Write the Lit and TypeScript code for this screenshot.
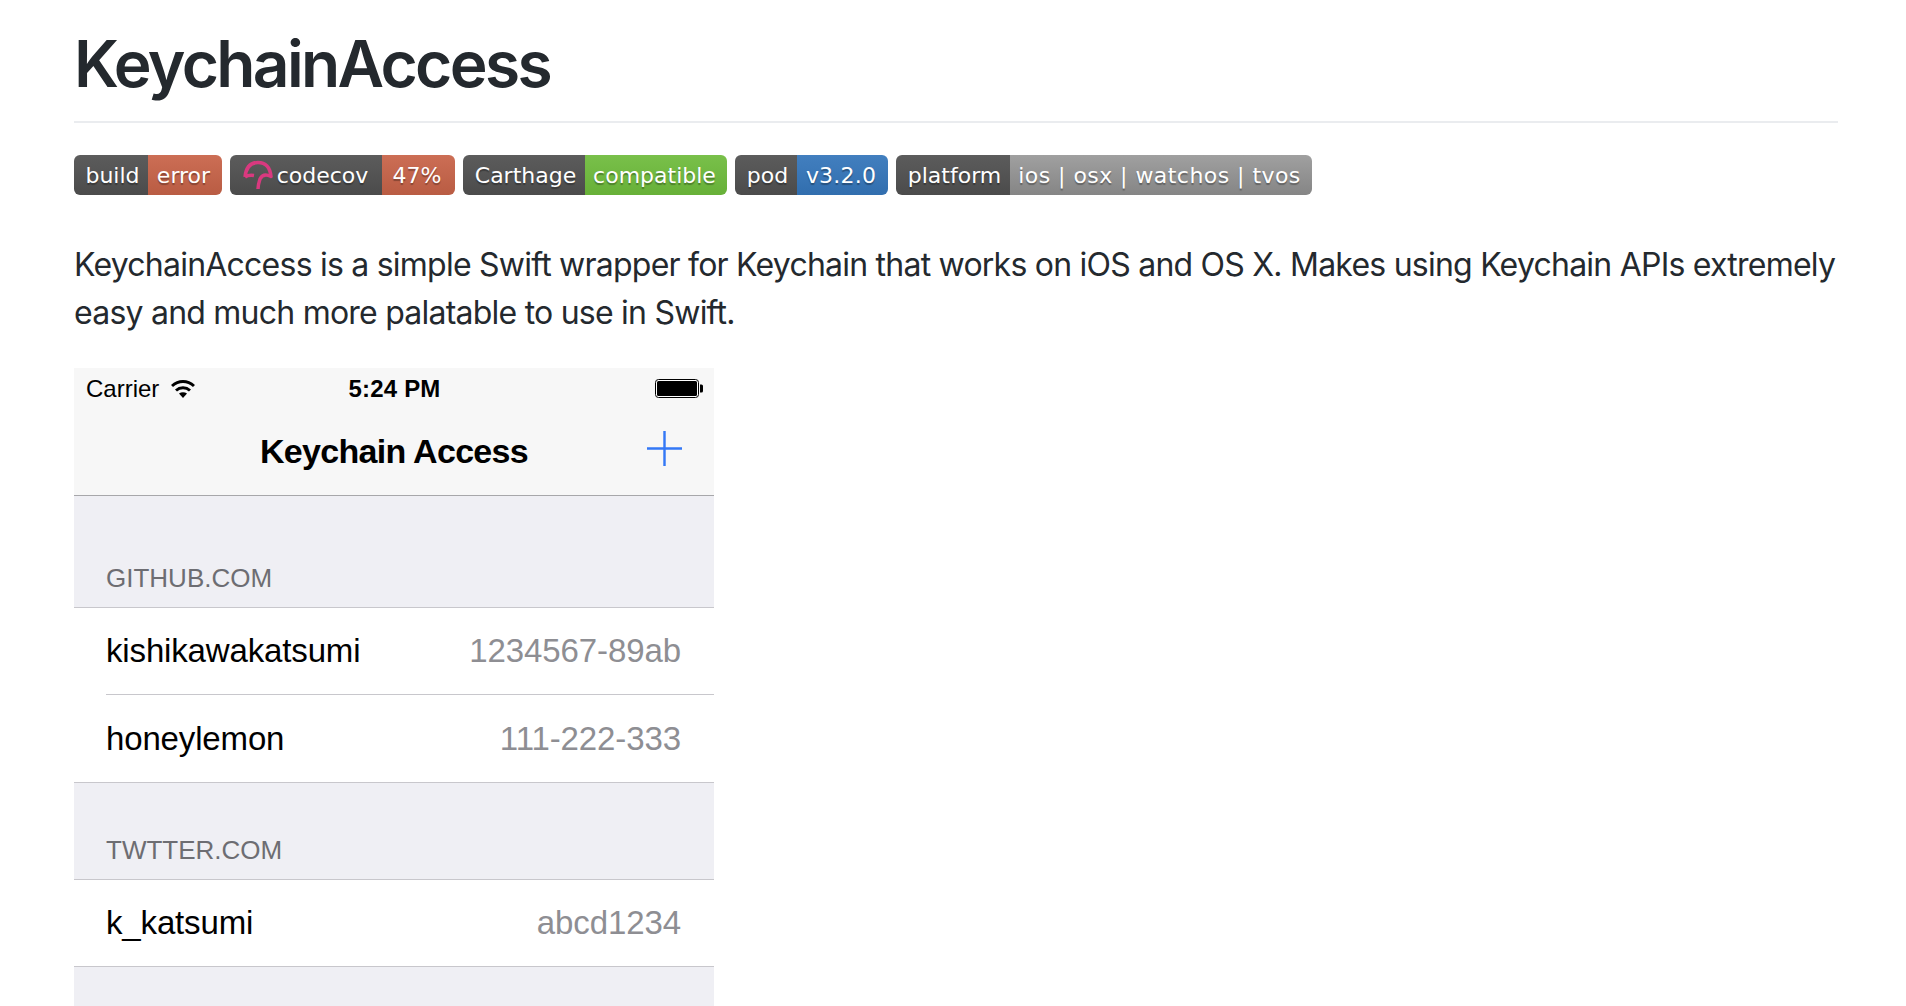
import { LitElement, html, css, svg } from "lit";
import { customElement } from "lit/decorators.js";

interface Seg {
  text: string;
  width: number;
  tone: string;
}

const badges: { segs: Seg[]; icon?: boolean }[] = [
  { segs: [{ text: "build", width: 74, tone: "dark" }, { text: "error", width: 74, tone: "red" }] },
  { segs: [{ text: "codecov", width: 152, tone: "dark" }, { text: "47%", width: 73, tone: "red" }], icon: true },
  { segs: [{ text: "Carthage", width: 122, tone: "dark" }, { text: "compatible", width: 142, tone: "green" }] },
  { segs: [{ text: "pod", width: 62, tone: "dark" }, { text: "v3.2.0", width: 91, tone: "blue" }] },
  { segs: [{ text: "platform", width: 114, tone: "dark" }, { text: "ios | osx | watchos | tvos", width: 302, tone: "gray" }] },
];

const sections = [
  {
    title: "GITHUB.COM",
    rows: [
      { name: "kishikawakatsumi", value: "1234567-89ab" },
      { name: "honeylemon", value: "111-222-333" },
    ],
  },
  { title: "TWTTER.COM", rows: [{ name: "k_katsumi", value: "abcd1234" }] },
];

const codecovIcon = svg`<g fill="none" stroke="#d9397f" stroke-width="3.5" stroke-linejoin="round">
  <path d="M9 23C10 13 15 8.500 22 8.500S34 13 35 22.500C30 20 26 21 24 25 23 28 22 31 22 35" />
  <path d="M9 23C12 21 15 21 18 21.500" />
</g>`;

@customElement("app-root")
export class AppRoot extends LitElement {
  static styles = css`
    :host {
      display: block;
      height: 100vh;
      overflow: hidden;
      background: #fff;
      color: #24292e;
      font-family: Inter, "Liberation Sans", sans-serif;
    }
    .page {
      padding: 0 68px 0 74px;
    }
    h1 {
      margin: 0;
      height: 121px;
      font-size: 64px;
      line-height: 127px;
      font-weight: 600;
      letter-spacing: -2.65px;
      border-bottom: 2px solid #eaecef;
    }
    .badges {
      display: flex;
      gap: 8px;
      margin-top: 32px;
    }
    .badge {
      display: flex;
      height: 40px;
      border-radius: 6px;
      overflow: hidden;
      position: relative;
    }
    .seg {
      display: flex;
      align-items: center;
      justify-content: center;
      box-sizing: border-box;
      color: #fff;
      font-family: "DejaVu Sans", Verdana, sans-serif;
      font-size: 22px;
      white-space: nowrap;
      text-shadow: 0 2px 1px rgba(1, 1, 1, 0.3);
      padding-right: 3px;
    }
    .seg.dark {
      background: linear-gradient(#5c5c5c, #4b4b4b);
      padding: 0 0 0 3px;
    }
    .seg.red { background: linear-gradient(#cc6e55, #b95c43); }
    .seg.green { background: linear-gradient(#79c04a, #67b038); }
    .seg.blue { background: linear-gradient(#427fbf, #316eae); letter-spacing: 0.2px; }
    .seg.gray { background: linear-gradient(#a0a0a0, #858585); letter-spacing: 0.45px; }
    .seg.dark.with-icon { padding-left: 33px; }
    .badge svg {
      position: absolute;
      left: 6px;
      top: -1px;
      width: 50px;
      height: 42px;
    }
    p {
      margin: 46px 0 0;
      font-size: 32px;
      line-height: 48px;
      letter-spacing: -0.77px;
    }
    .phone {
      width: 640px;
      margin-top: 31px;
      background: #efeff4;
      font-family: "Liberation Sans", Arial, sans-serif;
      color: #000;
    }
    .bar {
      background: #f7f7f7;
      border-bottom: 1px solid #a7a7aa;
    }
    .status {
      height: 40px;
      box-sizing: border-box;
      display: grid;
      grid-template-columns: 1fr auto 1fr;
      align-items: center;
      padding: 1px 11px 0 12px;
      font-size: 24px;
    }
    .carrier {
      display: flex;
      align-items: center;
      gap: 12px;
    }
    .time { font-weight: 700; letter-spacing: 0.2px; }
    .battery { justify-self: end; display: flex; }
    .nav {
      height: 87px;
      display: flex;
      align-items: center;
      justify-content: center;
      position: relative;
      font-size: 34px;
      font-weight: 700;
      letter-spacing: -0.7px;
    }
    .plus {
      position: absolute;
      left: 573px;
      top: 23px;
      width: 35px;
      height: 35px;
    }
    .section-title {
      height: 44px;
      padding-left: 32px;
      font-size: 26px;
      line-height: 30px;
      color: #6d6d72;
    }
    .section { padding-top: 52px; }
    .section.first { padding-top: 67px; }
    .rows {
      background: #fff;
      border-top: 1px solid #c8c7cc;
      border-bottom: 1px solid #c8c7cc;
    }
    .row {
      height: 86px;
      margin-left: 32px;
      padding-right: 33px;
      display: flex;
      align-items: center;
      justify-content: space-between;
      font-size: 33px;
      letter-spacing: -0.15px;
    }
    .row + .row {
      border-top: 1px solid #c8c7cc;
      height: 87px;
    }
    .value { color: #8e8e93; letter-spacing: -0.1px; }
    .tail { height: 200px; }
  `;

  render() {
    return html`
      <div class="page">
        <h1>KeychainAccess</h1>
        <div class="badges">
          ${badges.map(
            (b) => html`
              <div class="badge">
                ${b.segs.map(
                  (s, i) => html`<span
                    class="seg ${s.tone} ${b.icon && i === 0 ? "with-icon" : ""}"
                    style="width:${s.width}px"
                    >${s.text}</span
                  >`
                )}
                ${b.icon ? html`<svg viewBox="0 0 50 42">${codecovIcon}</svg>` : ""}
              </div>
            `
          )}
        </div>
        <p>
          KeychainAccess is a simple Swift wrapper for Keychain that works on iOS and OS X. Makes using Keychain APIs
          extremely easy and much more palatable to use in Swift.
        </p>
        <div class="phone">
          <div class="bar">
            <div class="status">
              <div class="carrier">
                Carrier
                <svg width="24" height="19" viewBox="0 0 24 19">
                  <path d="M1 7C7.500 1 16.500 1 23 7" fill="none" stroke="#000" stroke-width="3" />
                  <path d="M5 11.500c4-3.600 10-3.600 14 0" fill="none" stroke="#000" stroke-width="3" />
                  <path d="M8 14.500c2.400-1.600 5.600-1.600 8 0l-4 4.500z" />
                </svg>
              </div>
              <div class="time">5:24 PM</div>
              <div class="battery">
                <svg width="48" height="19" viewBox="0 0 48 19">
                  <rect x="0.500" y="0.500" width="43" height="18" rx="3" fill="#fff" stroke="#000" />
                  <rect x="2" y="2" width="40" height="15" rx="1.500" fill="#000" />
                  <path d="M45 5.500h1.500a1.500 1.500 0 0 1 1.500 1.500v5a1.500 1.500 0 0 1-1.500 1.500H45z" />
                </svg>
              </div>
            </div>
            <div class="nav">
              Keychain Access
              <svg class="plus" viewBox="0 0 36 36">
                <path d="M18 0v36M0 18h36" stroke="#3478f6" stroke-width="2.500" />
              </svg>
            </div>
          </div>
          ${sections.map(
            (s, i) => html`
              <div class="section ${i === 0 ? "first" : ""}">
                <div class="section-title">${s.title}</div>
                <div class="rows">
                  ${s.rows.map(
                    (r) => html`<div class="row"><span>${r.name}</span><span class="value">${r.value}</span></div>`
                  )}
                </div>
              </div>
            `
          )}
          <div class="tail"></div>
        </div>
      </div>
    `;
  }
}
